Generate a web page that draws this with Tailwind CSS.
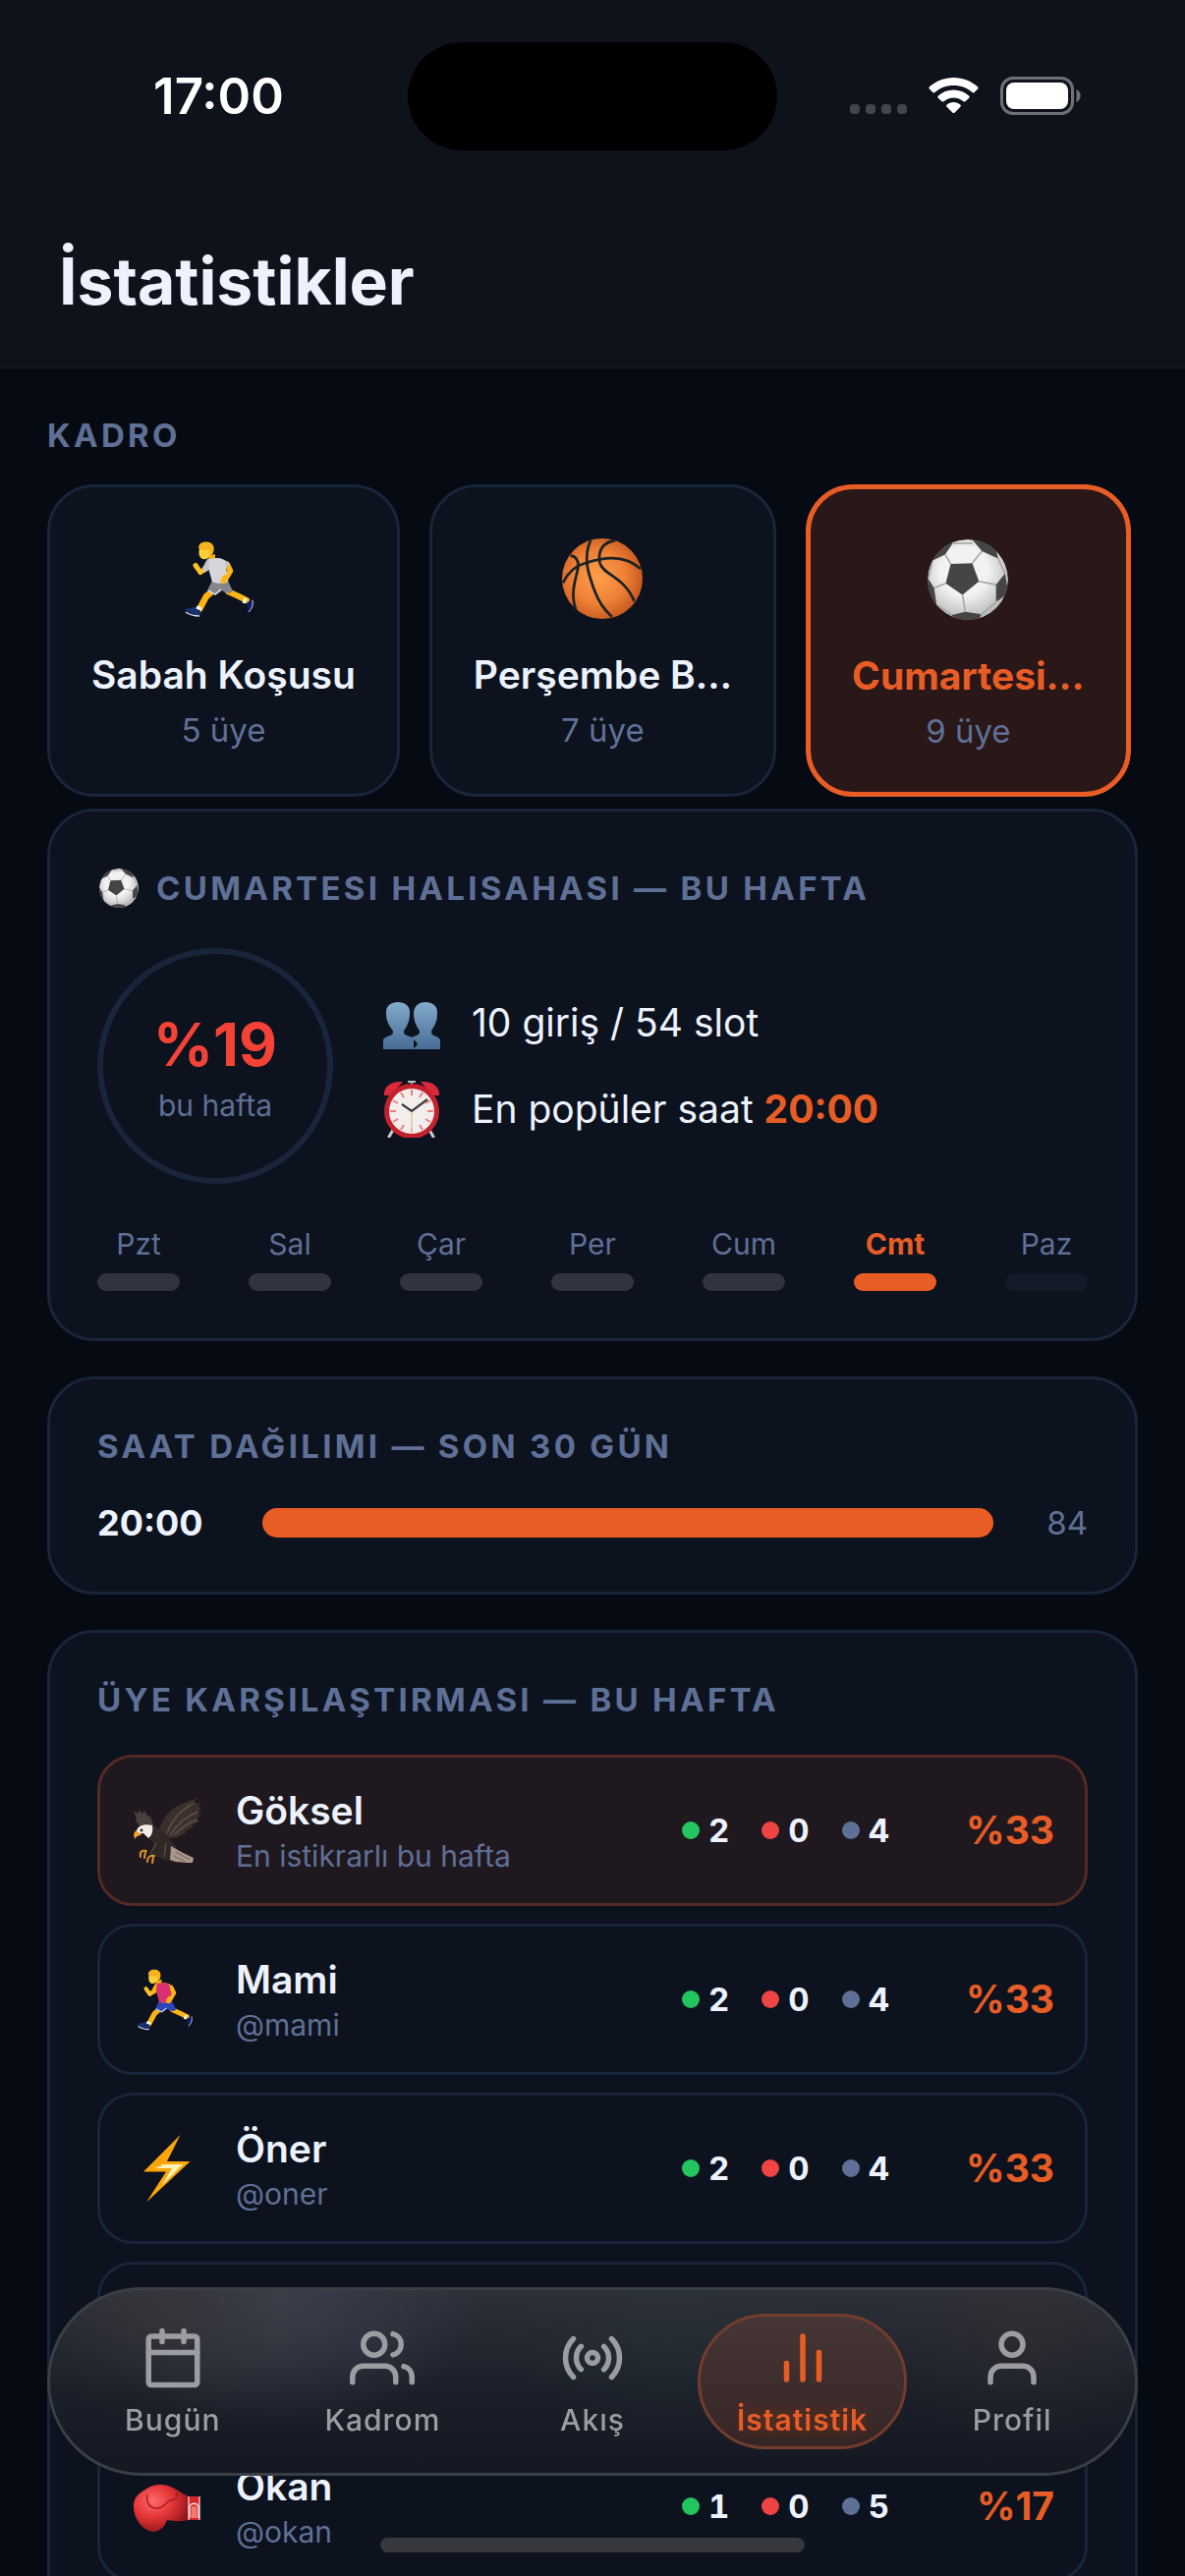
<!DOCTYPE html>
<html lang="tr">
  <head>
    <meta charset="UTF-8" />
    <title>İstatistikler</title>
    <meta name="viewport" content="width=device-width, initial-scale=1" />
    <script src="https://cdn.jsdelivr.net/npm/@tailwindcss/browser@4"></script>
  </head>
  <body class="flex h-screen flex-col overflow-hidden bg-[#060a12] font-['Inter',sans-serif] text-[#edf2ff]">

    <!-- shared icons -->
    <svg class="absolute size-0" aria-hidden="true">
      <defs>
        <radialGradient id="ballWhite" cx="45%" cy="40%" r="60%">
          <stop offset="0.5" stop-color="#f2f2f2" />
          <stop offset="1" stop-color="#b9b9b9" />
        </radialGradient>
        <radialGradient id="ballOrange" cx="45%" cy="48%" r="55%">
          <stop offset="0" stop-color="#ff9f4a" />
          <stop offset="0.6" stop-color="#ee8136" />
          <stop offset="1" stop-color="#c75a20" />
        </radialGradient>
        <linearGradient id="bust" x1="0" y1="0" x2="0" y2="1">
          <stop offset="0" stop-color="#83abcb" />
          <stop offset="1" stop-color="#476c95" />
        </linearGradient>
        <radialGradient id="glove" cx="35%" cy="35%" r="70%">
          <stop offset="0" stop-color="#ff6a6a" />
          <stop offset="0.5" stop-color="#e53538" />
          <stop offset="1" stop-color="#8f1518" />
        </radialGradient>
      </defs>
      <clipPath id="soccerClip"><circle cx="40" cy="40" r="40" /></clipPath>
      <symbol id="soccer" viewBox="0 0 80 80">
        <g clip-path="url(#soccerClip)">
          <circle cx="40" cy="40" r="40" fill="url(#ballWhite)" />
          <g fill="#454545">
            <path d="M23 24.300L44.400 23.700 51 41.700 34.700 55 18 43.700z" />
            <path d="M5 21L17.400 15 25 4 10 2z" />
            <path d="M45 1L54 11.700 70 19 66 0z" />
            <path d="M77 34L68 45v17l12-8z" />
            <path d="M0 38l6.500 10.300 2.500 17-9 3z" />
            <path d="M24 75l13.500-3 16 2.500-4 8H28z" />
          </g>
          <path d="M23 24.300L17.400 15M44.400 23.700L54 11.700M51 41.700L68 45M34.700 55l2.800 17M18 43.700L6.500 48.300M25 4h20M68 62l-15 13M9 65l15 10M5 21l-4 17M70 19l7 15" fill="none" stroke="#a3a3a3" stroke-width="1.500" />
        </g>
      </symbol>
      <symbol id="runner" viewBox="0 0 82 82">
        <path d="M45 26l3.500 7-6 10" fill="none" stroke="#fdb515" stroke-width="5.500" stroke-linecap="round" stroke-linejoin="round" />
        <path d="M46 54l11 5 8 4" fill="none" stroke="#fdb515" stroke-width="6" stroke-linecap="round" />
        <path d="M31 53l-7 6-7 13" fill="none" stroke="#fdb515" stroke-width="6.500" stroke-linecap="round" stroke-linejoin="round" />
        <path d="M64 61l-2 5" stroke="#fff" stroke-width="3" />
        <path d="M65 66l6-5c2 6-1 12-5 15-1-3 1-6-1-10z" fill="#131a6b" />
        <path d="M71 63c1 5-1 9-4 12" stroke="#d9dcf0" fill="none" />
        <path d="M2 72l10-2 6 2v6c-6 1-13-2-16-6z" fill="#17306e" />
        <path d="M3 75c4 3 9 4 14 4" stroke="#d9dcf0" stroke-width="1.500" fill="none" />
        <path d="M14 70l5 2" stroke="#fff" stroke-width="3" />
        <path d="M30 43h16l5 11c-3 3-7 2-11-1l-7 5-8-5z" fill="var(--shorts)" />
        <path d="M26 53l7 4 6-5" fill="none" stroke="#e9ebf2" stroke-width="1.300" />
        <path d="M23 31l-5 3.500-5-7" fill="none" stroke="#ffc226" stroke-width="5" stroke-linecap="round" stroke-linejoin="round" />
        <path d="M27 17l6-1v9h-8z" fill="#f5a80f" />
        <path d="M25 21l10-1c5 0 11 3 13 7l-4 3 2 14c-5 2-11 2-16 0l-3-12-5 3-2-5z" fill="var(--sleeve)" />
        <path d="M27 21l8-1c3 0 6 1 8 4l1 6 2 14c-5 2-11 2-16 0l-4-14z" fill="var(--shirt)" />
        <path d="M17 10c-1 4-1 9 3 11 6 1 9-3 10-10z" fill="#ffcf3a" />
        <path d="M16 10c0-5 4-7 9-6.500 6 .500 8 6 6 11l-3 4-1-7c-4 1-7 0-11-1.500z" fill="#f4b31c" />
        <path d="M41.500 43l2-3" stroke="#fdb515" stroke-width="6" stroke-linecap="round" />
      </symbol>
    </svg>

    <!-- status bar + title -->
    <header class="shrink-0 border-b border-[#181c25] bg-[#0e131b]">
      <div class="grid h-[195px] grid-cols-[1fr_376px_1fr] items-center">
        <time class="justify-self-center pl-[30px] text-[51px] leading-[60px] font-semibold text-white">17:00</time>
        <div class="h-[110px] rounded-full bg-black"></div>
        <div class="flex items-center gap-[22px] pl-[74px]">
          <div class="flex gap-[6px] pt-[27px]">
            <i class="size-[10px] rounded-[4px] bg-[#41454c]"></i>
            <i class="size-[10px] rounded-[4px] bg-[#41454c]"></i>
            <i class="size-[10px] rounded-[4px] bg-[#41454c]"></i>
            <i class="size-[10px] rounded-[4px] bg-[#41454c]"></i>
          </div>
          <svg class="h-[37px] w-[51px]" viewBox="0 0 51 37" fill="#fff">
            <path d="M25.500 0C35 0 43.500 3.500 50 9.300c.700.600.700 1.600.100 2.300l-3.400 3.400c-.600.600-1.500.600-2.200.100C39.500 10.600 32.900 8 25.500 8S11.500 10.600 6.500 15.100c-.700.500-1.600.500-2.200-.100L.900 11.600c-.600-.700-.600-1.700.100-2.300C7.500 3.500 16 0 25.500 0z" />
            <path d="M25.500 12.500c6 0 11.400 2.200 15.600 5.900.700.600.700 1.600.100 2.300l-3.500 3.400c-.600.600-1.500.600-2.200.100-2.700-2.300-6.200-3.700-10-3.700s-7.300 1.400-10 3.700c-.700.500-1.600.500-2.200-.100l-3.500-3.400c-.600-.700-.600-1.700.1-2.300 4.200-3.700 9.600-5.900 15.600-5.900z" />
            <path d="M25.500 25c2.600 0 5 .900 6.800 2.500.700.600.700 1.600.1 2.200l-5.700 5.800c-.700.700-1.700.700-2.400 0l-5.700-5.800c-.600-.600-.600-1.600.1-2.200C20.500 25.900 22.900 25 25.500 25z" />
          </svg>
          <svg class="h-[39px] w-[82px]" viewBox="0 0 82 39" fill="none">
            <rect x="1.500" y="1.500" width="72" height="36" rx="11.500" stroke="#6e7176" stroke-width="3" />
            <rect x="6" y="6" width="63" height="27" rx="8" fill="#fff" />
            <path d="M77.500 13c5.500 2.200 5.500 11 0 13z" fill="#6e7176" />
          </svg>
        </div>
      </div>
      <h1 class="px-[60px] pt-[51px] pb-[48px] text-[66px] leading-[80px] font-bold">İstatistikler</h1>
    </header>

    <main class="flex-1 overflow-y-auto px-12 pt-12 [scrollbar-width:none]">
      <h2 class="text-[33px] leading-[40px] font-bold tracking-widest text-[#5f7096]">KADRO</h2>

      <!-- squads -->
      <div class="mt-[30px] flex gap-[30px] overflow-x-auto [scrollbar-width:none]">
        <button type="button" class="flex h-[318px] shrink-0 flex-col items-center rounded-[48px] border-3 border-[#18253b] bg-[#0c121e] px-[42px] pt-[52px]">
          <svg class="size-[82px] [--shirt:#d5d5da] [--shorts:#85868c] [--sleeve:#c3c3c9]"><use href="#runner" /></svg>
          <span class="mt-[33px] text-[39px] leading-[48px] font-semibold">Sabah Koşusu</span>
          <span class="mt-3 text-[33px] leading-[40px] text-[#5f7096]">5 üye</span>
        </button>
        <button type="button" class="flex h-[318px] shrink-0 flex-col items-center rounded-[48px] border-3 border-[#18253b] bg-[#0c121e] px-[42px] pt-[52px]">
          <svg class="size-[82px]" viewBox="0 0 82 82">
            <circle cx="41" cy="41" r="41" fill="url(#ballOrange)" />
            <g fill="none" stroke="#1d2324" stroke-width="2.800">
              <path d="M1 45C6 35 13 28 24 25 40 20 62 15 80 31" />
              <path d="M8.500 17.500c7 1 9 7 7.500 14-2 10-8 24-2 41" />
              <path d="M29 2c-8 18-2 35 4 51 4 11 9 19 18 27" />
              <path d="M54 2C42 4 36 12 38.500 25c3 12 25 14 35 39" />
            </g>
          </svg>
          <span class="mt-[33px] text-[39px] leading-[48px] font-semibold">Perşembe B…</span>
          <span class="mt-3 text-[33px] leading-[40px] text-[#5f7096]">7 üye</span>
        </button>
        <button type="button" aria-pressed="true" class="flex h-[318px] shrink-0 flex-col items-center rounded-[48px] border-5 border-[#e85d26] bg-[#2a1718] px-[42px] pt-[51px]">
          <svg class="size-[82px]"><use href="#soccer" /></svg>
          <span class="mt-[33px] text-[39px] leading-[48px] font-bold text-[#e85d26]">Cumartesi…</span>
          <span class="mt-3 text-[33px] leading-[40px] text-[#5f7096]">9 üye</span>
        </button>
      </div>

      <!-- this week -->
      <section class="mt-3 rounded-[48px] border-3 border-[#18253b] bg-[#0c121e] px-12 pt-[58px] pb-12">
        <h2 class="flex items-center gap-[18px] pl-[2px] text-[33px] leading-[40px] font-bold tracking-widest text-[#5f7096]">
          <svg class="size-[40px]"><use href="#soccer" /></svg>
          CUMARTESI HALISAHASI — BU HAFTA
        </h2>
        <div class="mt-[41px] flex items-center gap-[51px]">
          <div class="flex size-[240px] flex-col items-center justify-center rounded-full border-6 border-[#18253b]">
            <strong class="text-[60px] leading-[72px] font-bold text-[#f44336]">%19</strong>
            <span class="mt-2 text-[30px] leading-[36px] text-[#5f7096]">bu hafta</span>
          </div>
          <ul class="space-y-[30px] text-[39px] leading-[58px]">
            <li class="flex items-center gap-[32px]">
              <svg class="size-[58px]" viewBox="0 0 58 58" fill="url(#bust)">
                <path d="M0 56V46c3-4 9-3 10-7 1-3-7-7-7-19C2 12 8 8 15 8s13 4 12 12c0 12-7 16-6 19 1 4 8 3 10 7v10z" />
                <path d="M27 56c5-1 9-4 7-7-1-2-4-3-6-4 2-3 8-2 9-6 1-3-6-7-6-19 0-8 5-12 12-12s13 4 12 12c0 12-7 16-6 19 1 4 6 3 9 7v10z" />
              </svg>
              10 giriş / 54 slot
            </li>
            <li class="flex items-center gap-[32px]">
              <svg class="size-[58px]" viewBox="0 0 58 58" fill="none">
                <path d="M10 50l-4 7M47 50l4 7" stroke="#c9ccd0" stroke-width="3" stroke-linecap="round" />
                <path d="M1 15C0 6 8 0 20 1L8 15zM57 15C58 6 50 0 38 1l12 14z" fill="#d92a3c" />
                <path d="M29 0v5M25 1h8" stroke="#b9bcc2" stroke-width="2" />
                <circle cx="29" cy="31" r="25.500" fill="#f3eeee" stroke="#c3212c" stroke-width="5" />
                <path d="M29 9v6M29 47v6M7 31h6M45 31h6M18 12l3 5M40 12l-3 5M18 50l3-5M40 50l-3-5M10 20l5 3M48 20l-5 3M10 42l5-3M48 42l-5-3" stroke="#ef7f7f" stroke-width="2" />
                <path d="M29 31v22" stroke="#e8c79a" stroke-width="1.500" />
                <path d="M19 24l10 7 16-12" stroke="#3b3b3b" stroke-width="2.200" />
              </svg>
              <span>En popüler saat <strong class="font-bold text-[#e85d26]">20:00</strong></span>
            </li>
          </ul>
        </div>
        <ul class="mt-[43px] flex justify-between text-center text-[30px] leading-[36px] text-[#5f7096]">
          <li class="w-[84px]">Pzt<div class="mt-3 h-[18px] rounded-[9px] bg-[#30343f]"></div></li>
          <li class="w-[84px]">Sal<div class="mt-3 h-[18px] rounded-[9px] bg-[#30343f]"></div></li>
          <li class="w-[84px]">Çar<div class="mt-3 h-[18px] rounded-[9px] bg-[#30343f]"></div></li>
          <li class="w-[84px]">Per<div class="mt-3 h-[18px] rounded-[9px] bg-[#30343f]"></div></li>
          <li class="w-[84px]">Cum<div class="mt-3 h-[18px] rounded-[9px] bg-[#30343f]"></div></li>
          <li class="w-[84px] font-bold text-[#e85d26]">Cmt<div class="mt-3 h-[18px] rounded-[9px] bg-[#e85d26]"></div></li>
          <li class="w-[84px]">Paz<div class="mt-3 h-[18px] rounded-[9px] bg-[#141a27]"></div></li>
        </ul>
      </section>

      <!-- hours -->
      <section class="mt-9 rounded-[48px] border-3 border-[#18253b] bg-[#0c121e] px-12 pt-12 pb-12">
        <h2 class="text-[33px] leading-[40px] font-bold tracking-widest text-[#5f7096]">SAAT DAĞILIMI — SON 30 GÜN</h2>
        <div class="mt-9 flex items-center gap-[30px] leading-[44px]">
          <span class="w-[138px] text-[36px] font-bold">20:00</span>
          <div class="h-[30px] flex-1 rounded-full bg-[#e85d26]"></div>
          <span class="w-[66px] text-right text-[33px] text-[#5f7096]">84</span>
        </div>
      </section>

      <!-- members -->
      <section class="mt-9 rounded-[48px] border-3 border-[#18253b] bg-[#0c121e] px-12 pt-12 pb-[240px]">
        <h2 class="text-[33px] leading-[40px] font-bold tracking-widest text-[#5f7096]">ÜYE KARŞILAŞTIRMASI — BU HAFTA</h2>
        <ul class="mt-9 space-y-[18px]">
          <li class="flex h-[154px] items-center rounded-[36px] border-3 border-[#542a24] bg-[#1f181f] pr-[31px] pl-[33px]">
            <svg class="size-[72px]" viewBox="0 -3 72 72">
              <path d="M66 0L50 6C38 11 31 20 27 32l10 9c10 0 14-4 18-6l-1-2 8-3-2-2 8-4-3-2 4-5-3-2 4-4-3-2 2-5-12 6z" fill="#3b302b" />
              <path d="M64 5C52 10 41 20 35 36M67 14C56 18 46 26 38 38M66 22c-9 3-17 9-24 16" fill="none" stroke="#63514a" stroke-width="1.500" />
              <path d="M1 13l5 3 0-4 4 4 2-3 3 5 3 1 4 11H8l-5-7 1-2z" fill="#4a3f3a" />
              <path d="M20 28c9 3 14 9 18 15 5 5 9 9 8 13l-10 9-8-4-9-2 4-11-6-6z" fill="#2f2826" />
              <path d="M24 46l-6 11M34 46l-2 14" stroke="#574943" stroke-width="1.500" />
              <path d="M39 49c8 5 16 9 23 12l-1 5c-9 0-17 0-23-3z" fill="#a8988a" />
              <path d="M44 55l14 8M42 59l12 6" stroke="#6f6156" />
              <path d="M20 28c-8-2-14 0-16 5l0 4 7-1 5 5c4-3 5-8 4-13z" fill="#f1ece6" />
              <path d="M4 33c-3 2-4 6-1 9 0-3 3-4 6-4z" fill="#f3a623" />
              <circle cx="9" cy="33" r="1.400" fill="#1c1c1c" />
              <path d="M14 54c-5-1-7 1-6 6M13 55l-1 6M22 59c-5-1-7 2-7 6M21 60l-1 6" fill="none" stroke="#d9952c" stroke-width="2" stroke-linecap="round" />
            </svg>
            <div class="ml-[33px] flex-1 pt-[3px]">
              <p class="text-[39px] leading-[48px] font-semibold">Göksel</p>
              <p class="text-[30px] leading-[44px] text-[#5f7096]">En istikrarlı bu hafta</p>
            </div>
            <div class="flex gap-[33px] text-[33px] leading-[40px] font-bold tabular-nums">
              <span class="flex items-center gap-[9px]"><i class="size-[18px] rounded-full bg-[#22c55e]"></i>2</span>
              <span class="flex items-center gap-[9px]"><i class="size-[18px] rounded-full bg-[#ef4444]"></i>0</span>
              <span class="flex items-center gap-[9px]"><i class="size-[18px] rounded-full bg-[#5f7096]"></i>4</span>
            </div>
            <strong class="w-[168px] text-right text-[39px] leading-[48px] font-bold text-[#e85d26]">%33</strong>
          </li>
          <li class="flex h-[154px] items-center rounded-[36px] border-3 border-[#18253b] pr-[31px] pl-[33px]">
            <svg class="size-[72px] p-[3px] [--shirt:#d9306f] [--shorts:#2b45b4] [--sleeve:#fdb515]"><use href="#runner" /></svg>
            <div class="ml-[33px] flex-1 pt-[3px]">
              <p class="text-[39px] leading-[48px] font-semibold">Mami</p>
              <p class="text-[30px] leading-[44px] text-[#5f7096]">@mami</p>
            </div>
            <div class="flex gap-[33px] text-[33px] leading-[40px] font-bold tabular-nums">
              <span class="flex items-center gap-[9px]"><i class="size-[18px] rounded-full bg-[#22c55e]"></i>2</span>
              <span class="flex items-center gap-[9px]"><i class="size-[18px] rounded-full bg-[#ef4444]"></i>0</span>
              <span class="flex items-center gap-[9px]"><i class="size-[18px] rounded-full bg-[#5f7096]"></i>4</span>
            </div>
            <strong class="w-[168px] text-right text-[39px] leading-[48px] font-bold text-[#e85d26]">%33</strong>
          </li>
          <li class="flex h-[154px] items-center rounded-[36px] border-3 border-[#18253b] pr-[31px] pl-[33px]">
            <svg class="size-[72px]" viewBox="0 0 72 72">
              <path d="M48.500 2L35 29h23.500L14 70.500 34 39.500H11z" fill="#fda60c" />
              <path d="M43 11L29 33.500l-7 2.500h18l-10 17 21-21H30z" fill="#fff3b8" />
            </svg>
            <div class="ml-[33px] flex-1 pt-[3px]">
              <p class="text-[39px] leading-[48px] font-semibold">Öner</p>
              <p class="text-[30px] leading-[44px] text-[#5f7096]">@oner</p>
            </div>
            <div class="flex gap-[33px] text-[33px] leading-[40px] font-bold tabular-nums">
              <span class="flex items-center gap-[9px]"><i class="size-[18px] rounded-full bg-[#22c55e]"></i>2</span>
              <span class="flex items-center gap-[9px]"><i class="size-[18px] rounded-full bg-[#ef4444]"></i>0</span>
              <span class="flex items-center gap-[9px]"><i class="size-[18px] rounded-full bg-[#5f7096]"></i>4</span>
            </div>
            <strong class="w-[168px] text-right text-[39px] leading-[48px] font-bold text-[#e85d26]">%33</strong>
          </li>
          <li class="h-[154px] rounded-[36px] border-3 border-[#18253b]"></li>
          <li class="flex h-[154px] items-center rounded-[36px] border-3 border-[#18253b] pr-[31px] pl-[33px]">
            <svg class="size-[72px]" viewBox="0 0 72 72">
              <path d="M57 26h11v24H57z" fill="#d3262a" />
              <path d="M1 38C0 29 5 23 13 19c6-5 15-6 23-4 8 3 14 8 21 11v24c-8 2-15 1-22 0-2 6-6 11-13 12C11 62 2 50 1 38z" fill="url(#glove)" />
              <path d="M15 24c-2 8 2 14 10 14 7 0 8-6 13-8 5 0 8-3 7-8" fill="none" stroke="#a51d20" stroke-width="1.500" />
              <path d="M57 26v24M68 26v24M58 48V37c1-5 8-5 9 0v11" fill="none" stroke="#f1dada" stroke-width="1.300" />
              <path d="M59.500 48V38c1-3 5-3 6 0v10z" fill="#f4786f" />
            </svg>
            <div class="ml-[33px] flex-1 pt-[3px]">
              <p class="text-[39px] leading-[48px] font-semibold">Okan</p>
              <p class="text-[30px] leading-[44px] text-[#5f7096]">@okan</p>
            </div>
            <div class="flex gap-[33px] text-[33px] leading-[40px] font-bold tabular-nums">
              <span class="flex items-center gap-[9px]"><i class="size-[18px] rounded-full bg-[#22c55e]"></i>1</span>
              <span class="flex items-center gap-[9px]"><i class="size-[18px] rounded-full bg-[#ef4444]"></i>0</span>
              <span class="flex items-center gap-[9px]"><i class="size-[18px] rounded-full bg-[#5f7096]"></i>5</span>
            </div>
            <strong class="w-[168px] text-right text-[39px] leading-[48px] font-bold text-[#e85d26]">%17</strong>
          </li>
        </ul>
      </section>
    </main>

    <!-- tab bar -->
    <nav class="fixed inset-x-12 bottom-[102px] grid h-[192px] grid-cols-5 rounded-full border-3 border-[#3c3e46] bg-[radial-gradient(ellipse_170px_110px_at_11%_12%,#38363380_0%,transparent_100%),radial-gradient(ellipse_210px_130px_at_21%_5%,#3b3e4c_0%,transparent_100%),radial-gradient(ellipse_170px_120px_at_90%_20%,#35303080_0%,transparent_100%),radial-gradient(ellipse_170px_130px_at_57%_15%,#28333580_0%,transparent_100%),linear-gradient(#2d3039,#1a1f29_55%,#141823)] px-[18px] py-[24px] text-[30px] leading-[36px] font-medium tracking-[1px] text-[#9c9da1]">
      <a href="#" class="flex flex-col items-center gap-3 pt-3">
        <svg class="size-[66px]" viewBox="0 0 24 24" fill="none" stroke="currentColor" stroke-width="2" stroke-linecap="round" stroke-linejoin="round">
          <rect x="3" y="4" width="18" height="18" rx="1" />
          <path d="M16 2v4M8 2v4M3 10h18" />
        </svg>
        Bugün
      </a>
      <a href="#" class="flex flex-col items-center gap-3 pt-3">
        <svg class="size-[66px]" viewBox="0 0 24 24" fill="none" stroke="currentColor" stroke-width="2" stroke-linecap="round" stroke-linejoin="round">
          <path d="M17 21v-2a4 4 0 0 0-4-4H5a4 4 0 0 0-4 4v2" />
          <circle cx="9" cy="7" r="4" />
          <path d="M23 21v-2a4 4 0 0 0-3-3.870M16 3.130a4 4 0 0 1 0 7.750" />
        </svg>
        Kadrom
      </a>
      <a href="#" class="flex flex-col items-center gap-3 pt-3">
        <svg class="size-[66px]" viewBox="0 0 24 24" fill="none" stroke="currentColor" stroke-width="2" stroke-linecap="round" stroke-linejoin="round">
          <circle cx="12" cy="12" r="2" />
          <path d="M16.240 7.760a6 6 0 0 1 0 8.490M7.760 16.240a6 6 0 0 1 0-8.490M19.070 4.930a10 10 0 0 1 0 14.140M4.930 19.070a10 10 0 0 1 0-14.140" />
        </svg>
        Akış
      </a>
      <a href="#" aria-current="page" class="flex flex-col items-center gap-3 rounded-full border-3 border-[#743c2d] bg-linear-to-b from-[#473636] to-[#352525] pt-[9px] text-[#e85d26]">
        <svg class="size-[66px]" viewBox="0 0 24 24" fill="none" stroke="currentColor" stroke-width="2" stroke-linecap="round" stroke-linejoin="round">
          <path d="M18 20V10M12 20V4M6 20v-6" />
        </svg>
        <span class="overflow-hidden font-semibold text-shadow-[0_0_24px_#e85d2680]">İstatistik</span>
      </a>
      <a href="#" class="flex flex-col items-center gap-3 pt-3">
        <svg class="size-[66px]" viewBox="0 0 24 24" fill="none" stroke="currentColor" stroke-width="2" stroke-linecap="round" stroke-linejoin="round">
          <path d="M20 21v-2a4 4 0 0 0-4-4H8a4 4 0 0 0-4 4v2" />
          <circle cx="12" cy="7" r="4" />
        </svg>
        Profil
      </a>
    </nav>

    <!-- home indicator -->
    <div class="fixed bottom-6 left-1/2 h-[15px] w-[432px] -translate-x-1/2 rounded-full bg-[#37383d]"></div>
  </body>
</html>
